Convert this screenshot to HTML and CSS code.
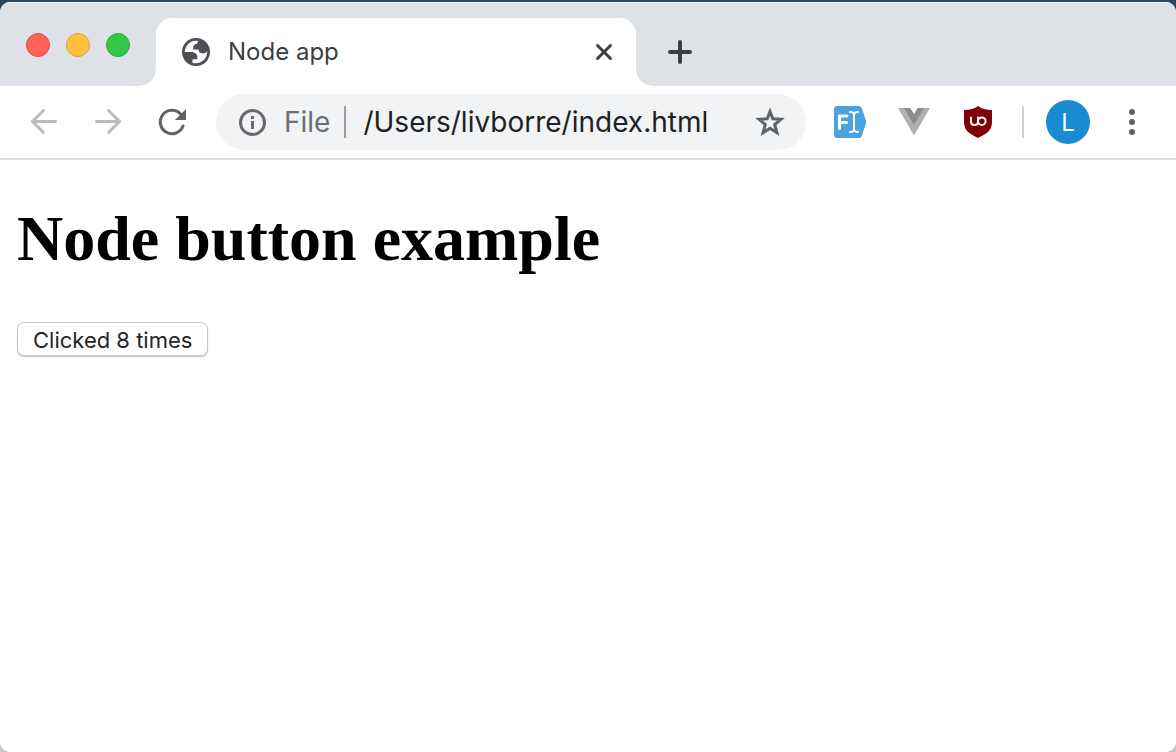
FILE: index.html
```html
<!DOCTYPE html>
<html lang="en">
<head>
<meta charset="utf-8">
<title>Node app</title>
<link rel="stylesheet" href="styles.css">
</head>
<body>
<div class="window">
  <header class="tab-strip">
    <div class="lights">
      <button class="light light-close" aria-label="Close window"></button>
      <button class="light light-min" aria-label="Minimize window"></button>
      <button class="light light-max" aria-label="Maximize window"></button>
    </div>
    <div class="tab">
      <svg class="favicon" viewBox="2 2 20 20" aria-hidden="true">
        <circle cx="12" cy="12" r="10" fill="#4d5156"/>
        <path fill="#fff" d="M4 12h4.400c3.407.022 4.922 1.730 4.543 5.127H9.488v2.470a8.004 8.004 0 0 0 10.498-8.083C19.327 12.504 18.332 13 17 13c-2.137 0-3.206-.916-3.206-2.750h-3.748c-.274-2.728.683-4.092 2.870-4.092 0-.975.327-1.597.811-1.970A8.004 8.004 0 0 0 4 12z"/>
      </svg>
      <span class="tab-title">Node app</span>
      <button class="icon-button tab-close" aria-label="Close tab">
        <svg class="close-icon" viewBox="0 0 20 20"><path d="M3.500 3.500l13 13M16.500 3.500l-13 13"/></svg>
      </button>
    </div>
    <button class="icon-button new-tab" aria-label="New tab">
      <svg class="plus-icon" viewBox="0 0 24 24"><path d="M12 2v20M2 12h20"/></svg>
    </button>
  </header>
  <nav class="toolbar" aria-label="Navigation">
    <div class="nav-buttons">
      <button class="icon-button" aria-label="Back"><svg class="nav-icon muted" viewBox="0 0 32 32"><path d="M27.500 15.500H4.500M15.500 4.500L4.500 15.500L15.500 26.500"/></svg></button>
      <button class="icon-button" aria-label="Forward"><svg class="nav-icon muted" viewBox="0 0 32 32"><path d="M4.500 15.500h23M16.500 4.500L27.500 15.500L16.500 26.500"/></svg></button>
      <button class="icon-button" aria-label="Reload"><svg class="nav-icon" viewBox="0 0 32 32"><path d="M27 20A11.700 11.700 0 1 1 24.500 8"/><path class="solid" d="M30 3v11H19z"/></svg></button>
    </div>
    <div class="omnibox">
      <svg class="info-icon" viewBox="0 0 28 28" aria-hidden="true"><circle cx="14.500" cy="14.500" r="12"/><path d="M14.500 13v8M14.500 8v3"/></svg>
      <span class="scheme">File</span>
      <input class="address" type="text" aria-label="Address" value="/Users/livborre/index.html">
      <button class="icon-button" aria-label="Bookmark"><svg class="star-icon" viewBox="0 0 30 30"><path d="M15 4.500l2.800 7.200l8.200.6l-6.300 5.200l2.200 8.200l-6.900-4.500l-6.900 4.500l2.200-8.200l-6.300-5.200l8.200-.6z"/></svg></button>
    </div>
    <div class="extensions">
      <button class="icon-button" aria-label="Font inspector">
        <svg class="ext-icon" viewBox="0 0 32 32"><path fill="#4aa3df" d="M3 0h22q2 0 2.700 1.800L31.700 14q.6 2 0 4l-4 12.200Q27 32 25 32H3q-3 0-3-3V3q0-3 3-3z"/><path class="white-line thick" d="M5.500 22.500V10h7.500M5.500 16.500h7"/><path class="white-line" d="M16 6q3.500 0 4 2q.5-2 4-2M16 26q3.500 0 4-2q.5 2 4 2M20 8v16"/></svg>
      </button>
      <button class="icon-button" aria-label="Vue devtools">
        <svg class="ext-icon" viewBox="0 0 32 32"><path fill="#b0b0b0" d="M0 2h32L16 29.500z"/><path fill="#8c8c8c" d="M6 2h20L16 19z"/><path fill="#fff" d="M12.300 2h7.400L16 8z"/></svg>
      </button>
      <button class="icon-button" aria-label="Content blocker">
        <svg class="ext-icon" viewBox="0 0 32 32"><path fill="#800009" d="M16 0q5 4 14 4v12c0 9-6 12-14 16C8 28 2 25 2 16V4q9 0 14-4z"/><path class="white-line" d="M9 11.500v4q0 3.500 3.500 3.500t3.500-3.500v-4"/><circle class="white-line" cx="19.800" cy="15.200" r="3.800"/></svg>
      </button>
    </div>
    <div class="divider"></div>
    <button class="avatar" aria-label="Profile">L</button>
    <button class="icon-button menu" aria-label="Menu"><svg class="menu-icon" viewBox="0 0 8 28"><circle cx="4" cy="4" r="3"/><circle cx="4" cy="14" r="3"/><circle cx="4" cy="24" r="3"/></svg></button>
  </nav>
  <main class="page">
    <h1 class="heading">Node button example</h1>
    <button class="counter">Clicked 8 times</button>
  </main>
</div>
</body>
</html>
```
FILE: styles.css
```css
* { box-sizing: border-box; }
body {
  margin: 0;
  padding-top: 2px;
  min-height: 100vh;
  display: flex;
  background: linear-gradient(#2b435b 0, #2b435b 20px, #c8c8c8 40px);
  font-family: Inter, "Liberation Sans", sans-serif;
}
button { margin: 0; padding: 0; border: 0; font: inherit; }
svg { display: block; flex: none; }
.window {
  flex: 1;
  min-width: 0;
  display: flex;
  flex-direction: column;
  background: #fff;
  border-radius: 10px;
  overflow: hidden;
}
.tab-strip {
  display: flex;
  align-items: flex-end;
  height: 84px;
  background: #dee1e6;
  box-shadow: inset 0 1px #f2f3f5;
}
.lights {
  align-self: flex-start;
  display: flex;
  gap: 16px;
  width: 156px;
  padding: 31px 0 0 26px;
}
.light { width: 24px; height: 24px; border-radius: 50%; border: 1px solid; }
.light-close { background: #ff625c; border-color: #e24a45; }
.light-min { background: #ffbf40; border-color: #e0a133; }
.light-max { background: #34c84a; border-color: #25ab35; }
.tab {
  position: relative;
  display: flex;
  align-items: center;
  flex: 0 1 480px;
  height: 68px;
  padding: 0 22px 0 26px;
  background: #fff;
  border-radius: 16px 16px 0 0;
}
.tab::before, .tab::after {
  content: "";
  position: absolute;
  bottom: 0;
  width: 16px;
  height: 16px;
}
.tab::before { right: 100%; background: radial-gradient(circle at 0 0, transparent 15px, #fff 16px); }
.tab::after { left: 100%; background: radial-gradient(circle at 100% 0, transparent 15px, #fff 16px); }
.favicon { width: 28px; height: 28px; margin-right: 18px; }
.tab-title { flex: 1; font-size: 24px; line-height: 32px; color: #3c4043; }
.icon-button { display: flex; background: none; }
.close-icon { width: 20px; height: 20px; fill: none; stroke: #3c4043; stroke-width: 3; stroke-linecap: round; }
.new-tab { align-self: center; margin: 16px 0 0 32px; }
.plus-icon { width: 24px; height: 24px; fill: none; stroke: #3c4043; stroke-width: 4; stroke-linecap: round; }
.toolbar {
  display: flex;
  align-items: center;
  height: 74px;
  padding: 0 40px 0 28px;
  border-bottom: 2px solid #dadce0;
}
.nav-buttons { display: flex; gap: 32px; margin-right: 28px; }
.nav-icon { width: 32px; height: 32px; fill: none; stroke: #5f6368; stroke-width: 3; stroke-linecap: round; }
.nav-icon.muted { stroke: #babcbe; }
.nav-icon .solid { fill: #5f6368; stroke: none; }
.omnibox {
  flex: 1;
  min-width: 0;
  display: flex;
  align-items: center;
  height: 56px;
  padding: 0 21px 0 22px;
  background: #f1f3f4;
  border-radius: 28px;
}
.info-icon { width: 28px; height: 28px; margin-right: 18px; fill: none; stroke: #67696c; stroke-width: 3; }
.scheme { padding-right: 14px; border-right: 2px solid #9b9da0; font-size: 28px; line-height: 32px; color: #6b6d70; }
.address {
  flex: 1;
  min-width: 0;
  padding: 0 0 0 17px;
  border: 0;
  background: none;
  font: 28px/32px Inter, "Liberation Sans", sans-serif;
  color: #202124;
}
.star-icon { width: 30px; height: 30px; fill: none; stroke: #5f6368; stroke-width: 3; }
.extensions { display: flex; gap: 32px; padding: 0 28px; }
.divider { width: 2px; height: 32px; margin-right: 22px; background: #cdcfd2; }
.ext-icon { width: 32px; height: 32px; }
.white-line { fill: none; stroke: #fff; stroke-width: 2; stroke-linecap: round; }
.thick { stroke-width: 3; }
.avatar { width: 44px; height: 44px; border-radius: 50%; background: #188bd2; color: #fff; font-size: 24px; }
.menu { margin-left: 38px; }
.menu-icon { width: 8px; height: 28px; fill: #5f6368; }
.page { padding: 41px 17px; }
.heading { margin: 0; font: bold 64px/76px "Liberation Serif", serif; color: #000; }
.counter {
  margin-top: 45px;
  height: 34px;
  padding: 2px 15px 0;
  border: 1px solid #c9c9c9;
  border-radius: 7px;
  box-shadow: 0 1px 1px #c4c4c4;
  background: #fff;
  color: #252525;
  font-size: 22px;
  line-height: 28px;
}
```
